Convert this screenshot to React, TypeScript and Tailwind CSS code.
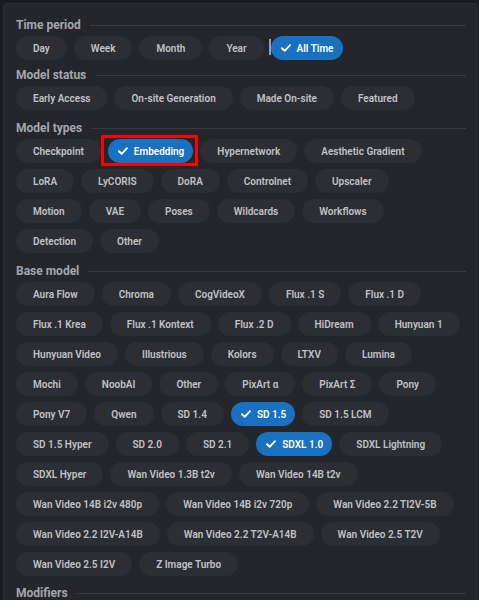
type Chip = { label: string; checked?: boolean; marked?: boolean };

const c = (label: string, checked = false, marked = false): Chip => ({ label, checked, marked });

const sections: { title: string; gap: string; rows: Chip[][] }[] = [
  {
    title: "Time period",
    gap: "mt-0",
    rows: [[c("Day"), c("Week"), c("Month"), c("Year"), c("All Time", true)]],
  },
  {
    title: "Model status",
    gap: "mt-[6px]",
    rows: [[c("Early Access"), c("On-site Generation"), c("Made On-site"), c("Featured")]],
  },
  {
    title: "Model types",
    gap: "mt-[9px]",
    rows: [
      [c("Checkpoint"), c("Embedding", true, true), c("Hypernetwork"), c("Aesthetic Gradient")],
      [c("LoRA"), c("LyCORIS"), c("DoRA"), c("Controlnet"), c("Upscaler")],
      [c("Motion"), c("VAE"), c("Poses"), c("Wildcards"), c("Workflows")],
      [c("Detection"), c("Other")],
    ],
  },
  {
    title: "Base model",
    gap: "mt-[9px]",
    rows: [
      [c("Aura Flow"), c("Chroma"), c("CogVideoX"), c("Flux .1 S"), c("Flux .1 D")],
      [c("Flux .1 Krea"), c("Flux .1 Kontext"), c("Flux .2 D"), c("HiDream"), c("Hunyuan 1")],
      [c("Hunyuan Video"), c("Illustrious"), c("Kolors"), c("LTXV"), c("Lumina")],
      [c("Mochi"), c("NoobAI"), c("Other"), c("PixArt α"), c("PixArt Σ"), c("Pony")],
      [c("Pony V7"), c("Qwen"), c("SD 1.4"), c("SD 1.5", true), c("SD 1.5 LCM")],
      [c("SD 1.5 Hyper"), c("SD 2.0"), c("SD 2.1"), c("SDXL 1.0", true), c("SDXL Lightning")],
      [c("SDXL Hyper"), c("Wan Video 1.3B t2v"), c("Wan Video 14B t2v")],
      [c("Wan Video 14B i2v 480p"), c("Wan Video 14B i2v 720p"), c("Wan Video 2.2 TI2V-5B")],
      [c("Wan Video 2.2 I2V-A14B"), c("Wan Video 2.2 T2V-A14B"), c("Wan Video 2.5 T2V")],
      [c("Wan Video 2.5 I2V"), c("Z Image Turbo")],
    ],
  },
  { title: "Modifiers", gap: "mt-[8px]", rows: [] },
];

function Check() {
  return (
    <svg width="10" height="8" viewBox="0 0 10 8" fill="none">
      <path d="M1 4.2 3.7 6.8 9 1.2" stroke="white" strokeWidth="1.9" strokeLinecap="round" strokeLinejoin="round" />
    </svg>
  );
}

function FilterChip({ chip, caret }: { chip: Chip; caret?: boolean }) {
  const body = chip.checked ? (
    <span className="flex h-[24px] items-center gap-[6px] rounded-full bg-[#1971c2] pl-[10px] pr-[9px] text-white">
      <Check />
      {chip.label}
    </span>
  ) : (
    <span className="flex h-[24px] items-center rounded-full bg-[#2c2e33] px-[17px] text-[#c1c2c5]">{chip.label}</span>
  );
  return (
    <span className="relative">
      {body}
      {caret && <span className="absolute -left-[2px] top-[3px] h-[16px] w-[2px] bg-[#9aa0aa]" />}
      {chip.marked && <span className="absolute -bottom-[3px] -left-[7px] -right-[5px] -top-[4px] border-[3px] border-[#ff0000]" />}
    </span>
  );
}

export default function App() {
  return (
    <div className="h-[600px] overflow-hidden bg-[#1a1b1e] pl-[3px] pt-[3px] font-['Roboto',sans-serif]">
      <div className="h-[640px] w-[475px] rounded-[4px] border border-[#2c2e33] bg-[#25262b] pl-[12px] pr-[11px] pt-[12px]">
        {sections.map((s) => (
          <div key={s.title} className={s.gap}>
            <div className="flex h-[18px] items-center gap-[9px]">
              <span className="text-[12px] font-bold text-[#a3a6ad]">{s.title}</span>
              <span className="h-px flex-1 bg-[#373a40]" />
            </div>
            {s.rows.length > 0 && (
              <div className="mt-[2px] flex flex-col gap-[6px] text-[10px] font-semibold">
                {s.rows.map((row, i) => (
                  <div key={i} className="flex gap-[7px]">
                    {row.map((chip) => (
                      <FilterChip key={chip.label} chip={chip} caret={chip.label === "All Time"} />
                    ))}
                  </div>
                ))}
              </div>
            )}
          </div>
        ))}
      </div>
    </div>
  );
}
